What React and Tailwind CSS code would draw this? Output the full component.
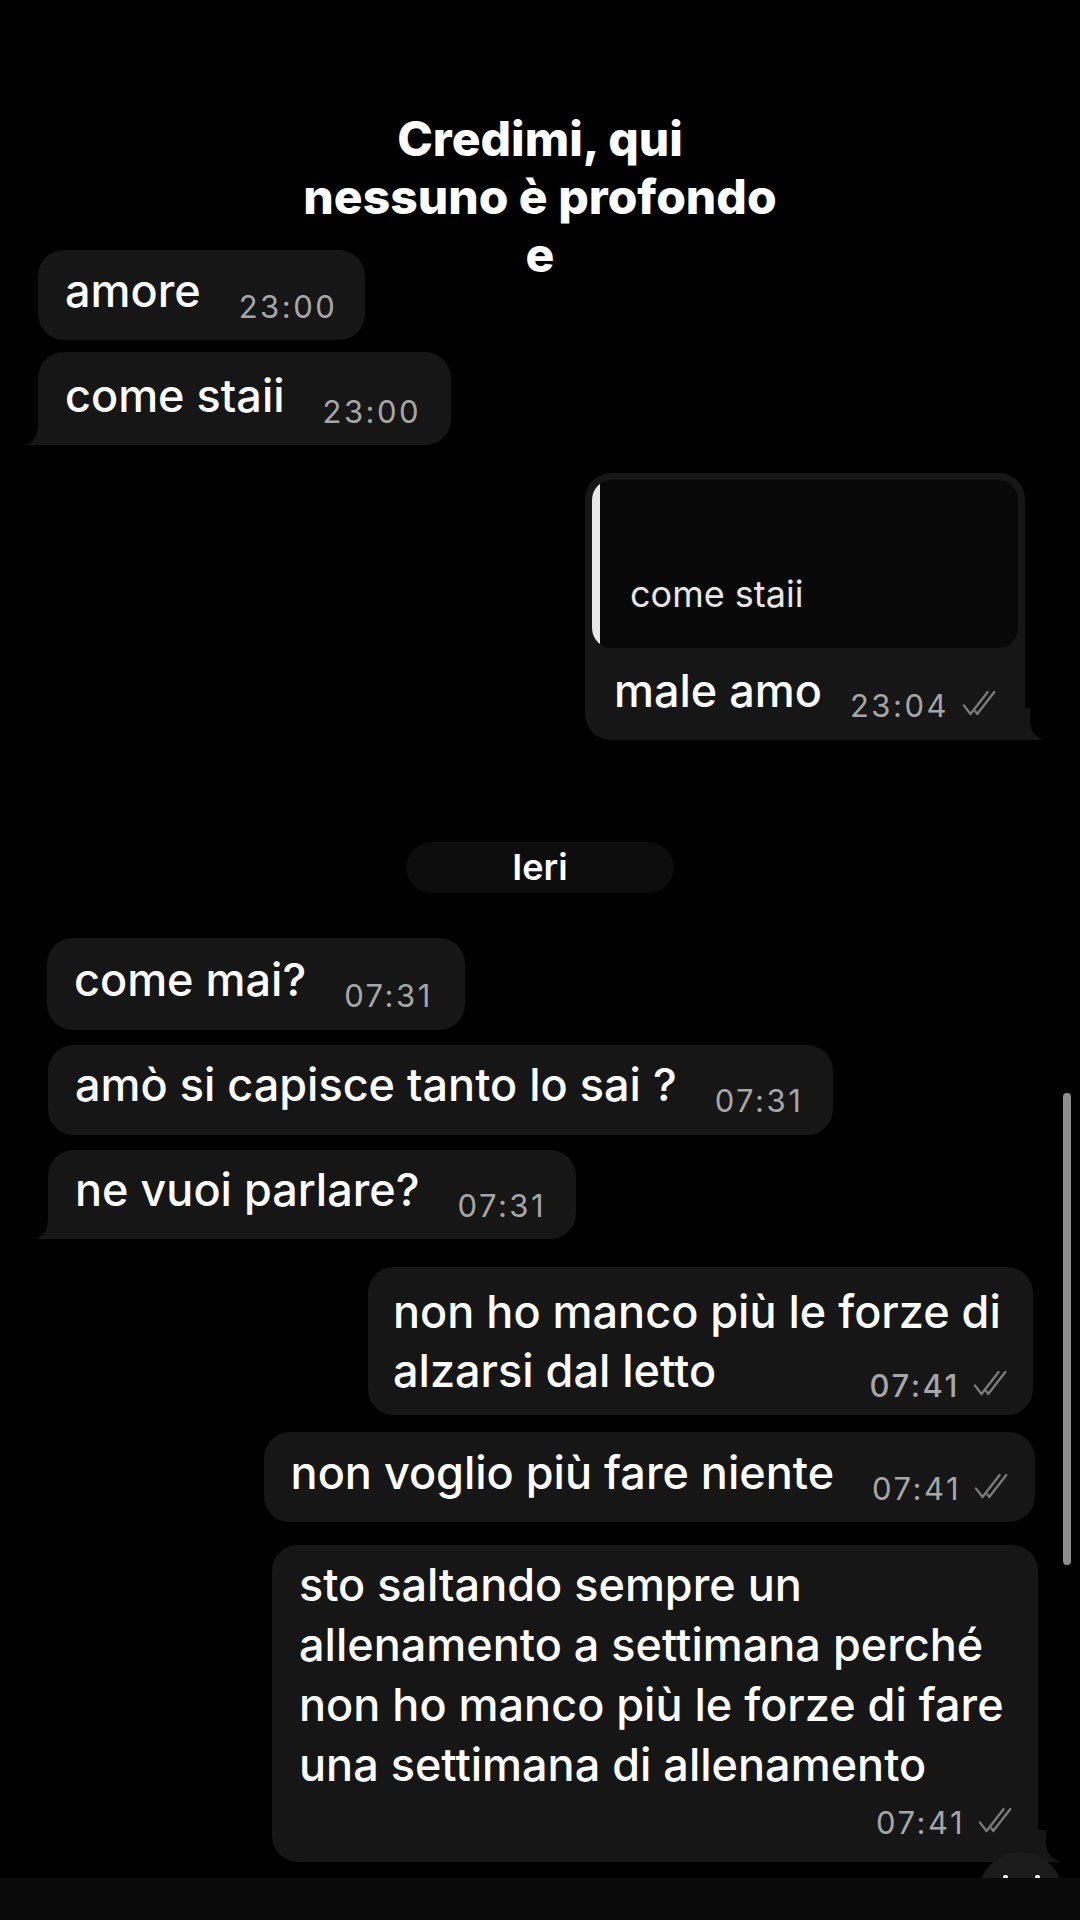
import React from "react";

function Checks() {
  return (
    <svg viewBox="0 0 42 28" className="mt-[2px] h-[27px] w-[40px] self-start" fill="none" stroke="#7c7c7c" strokeWidth="2.4" strokeLinecap="round" strokeLinejoin="round">
      <path d="M3 16 L10 25 L28 2" />
      <path d="M15 22 L17 25 L35 2" />
    </svg>
  );
}

function Time({ t, read }) {
  return (
    <span className="flex items-center gap-[12px] whitespace-nowrap text-[31px] leading-[36px] tracking-[2.5px] text-[#a6a6a6]">
      {t}
      {read && <Checks />}
    </span>
  );
}

function LeftTail() {
  return (
    <svg viewBox="0 0 30 30" className="absolute bottom-0 left-[-14px] h-[30px] w-[30px]" fill="#161616">
      <path d="M14 0 H30 V30 H0 C8 29 14 22 14 10 Z" />
    </svg>
  );
}

function RightTail({ className }) {
  return (
    <svg viewBox="0 0 40 32" preserveAspectRatio="none" className={`absolute bottom-0 h-[32px] ${className}`} fill="#161616">
      <path d="M24 0 H0 V32 H40 C31 30 24 23 24 12 Z" />
    </svg>
  );
}

// single line bubble, text + time on one row
function Bubble({ children, time, read, className, tail }) {
  return (
    <div className={`relative flex w-fit items-start bg-[#161616] pl-[27px] ${className}`}>
      <span className="whitespace-nowrap text-[45px] font-medium leading-[60px] text-white">{children}</span>
      <span className="ml-[38px] mt-[28px]">
        <Time t={time} read={read} />
      </span>
      {tail}
    </div>
  );
}

export default function App() {
  return (
    <div className="relative h-[1920px] w-[1080px] overflow-hidden bg-black font-['Inter','Liberation_Sans',sans-serif]">
      <div className="flex flex-col pt-[250px]">
        <Bubble time="23:00" className="ml-[38px] h-[90px] rounded-[26px] pt-[11px] pr-[28px]">
          amore
        </Bubble>
        <Bubble time="23:00" className="ml-[38px] mt-[12px] h-[93px] rounded-[26px] rounded-bl-[12px] pt-[14px] pr-[30px]" tail={<LeftTail />}>
          come staii
        </Bubble>

        {/* reply */}
        <div className="relative mr-[55px] mt-[28px] h-[267px] w-[440px] self-end rounded-[26px] rounded-br-[12px] bg-[#161616] p-[7px]">
          <div className="flex h-[168px] overflow-hidden rounded-[20px] bg-[#080808]">
            <div className="w-[8px] bg-[#e8e8e8]" />
            <div className="pl-[30px] pt-[92px] text-[36px] leading-[44px] text-[#e6e6e6]">come staii</div>
          </div>
          <div className="mt-[13px] flex items-start justify-between pl-[22px] pr-[17px]">
            <span className="whitespace-nowrap text-[45px] font-medium leading-[60px] text-white">male amo</span>
            <span className="mt-[27px]">
              <Time t="23:04" read />
            </span>
          </div>
          <RightTail className="right-[-19px] w-[35px]" />
        </div>

        <div className="mt-[102px] flex h-[51px] w-[268px] items-center justify-center self-center rounded-full bg-[#0c0c0c] text-[36px] font-semibold leading-[51px] text-white">
          Ieri
        </div>

        <Bubble time="07:31" className="ml-[47px] mt-[45px] h-[92px] rounded-[26px] pt-[12px] pr-[32px]">
          come mai?
        </Bubble>
        <Bubble time="07:31" className="ml-[48px] mt-[15px] h-[90px] rounded-[26px] pt-[10px] pr-[30px]">
          amò si capisce tanto lo sai ?
        </Bubble>
        <Bubble time="07:31" className="ml-[48px] mt-[15px] h-[89px] rounded-[26px] rounded-bl-[12px] pt-[10px] pr-[30px]" tail={<LeftTail />}>
          ne vuoi parlare?
        </Bubble>

        <div className="mr-[47px] mt-[28px] h-[148px] w-[665px] self-end rounded-[26px] bg-[#161616] pl-[25px] pr-[21px] pt-[15px] text-[45px] font-medium leading-[59px] text-white">
          <div className="whitespace-nowrap">non ho manco più le forze di</div>
          <div className="flex items-start justify-between">
            <span className="whitespace-nowrap">alzarsi dal letto</span>
            <span className="mt-[27px]">
              <Time t="07:41" read />
            </span>
          </div>
        </div>

        <Bubble time="07:41" read className="mr-[45px] mt-[17px] h-[90px] self-end rounded-[26px] pt-[11px] pr-[22px]">
          non voglio più fare niente
        </Bubble>

        <div className="relative mr-[42px] mt-[23px] flex h-[317px] w-[766px] flex-col self-end rounded-[26px] rounded-br-[12px] bg-[#161616] pl-[27px] pr-[21px] pt-[10px]">
          <p className="whitespace-nowrap text-[45px] font-medium leading-[60px] text-white">
            sto saltando sempre un
            <br />
            allenamento a settimana perché
            <br />
            non ho manco più le forze di fare
            <br />
            una settimana di allenamento
          </p>
          <div className="mt-[10px] flex justify-end">
            <Time t="07:41" read />
          </div>
          <RightTail className="right-[-24px] w-[40px]" />
        </div>

        <div className="relative z-10 mt-[16px] h-[42px] w-full bg-[#0a0a0a]" />
      </div>

      {/* story text overlay */}
      <div className="absolute left-0 right-0 top-[110px] text-center text-[48px] font-extrabold leading-[58px] text-white">
        Credimi, qui
        <br />
        nessuno è profondo
        <br />e
      </div>

      {/* scroll down button, mostly hidden under the input bar */}
      <div className="absolute left-[978px] top-[1852px] h-[85px] w-[85px] rounded-full bg-[#1b1b1b]">
        <span className="absolute left-[25px] top-[23px] h-[4px] w-[5px] rounded-full bg-white" />
        <span className="absolute left-[57px] top-[23px] h-[4px] w-[5px] rounded-full bg-white" />
      </div>

      {/* scrollbar */}
      <div className="absolute left-[1063px] top-[1093px] h-[472px] w-[8px] rounded-full bg-[#8e8e8e]" />
    </div>
  );
}
